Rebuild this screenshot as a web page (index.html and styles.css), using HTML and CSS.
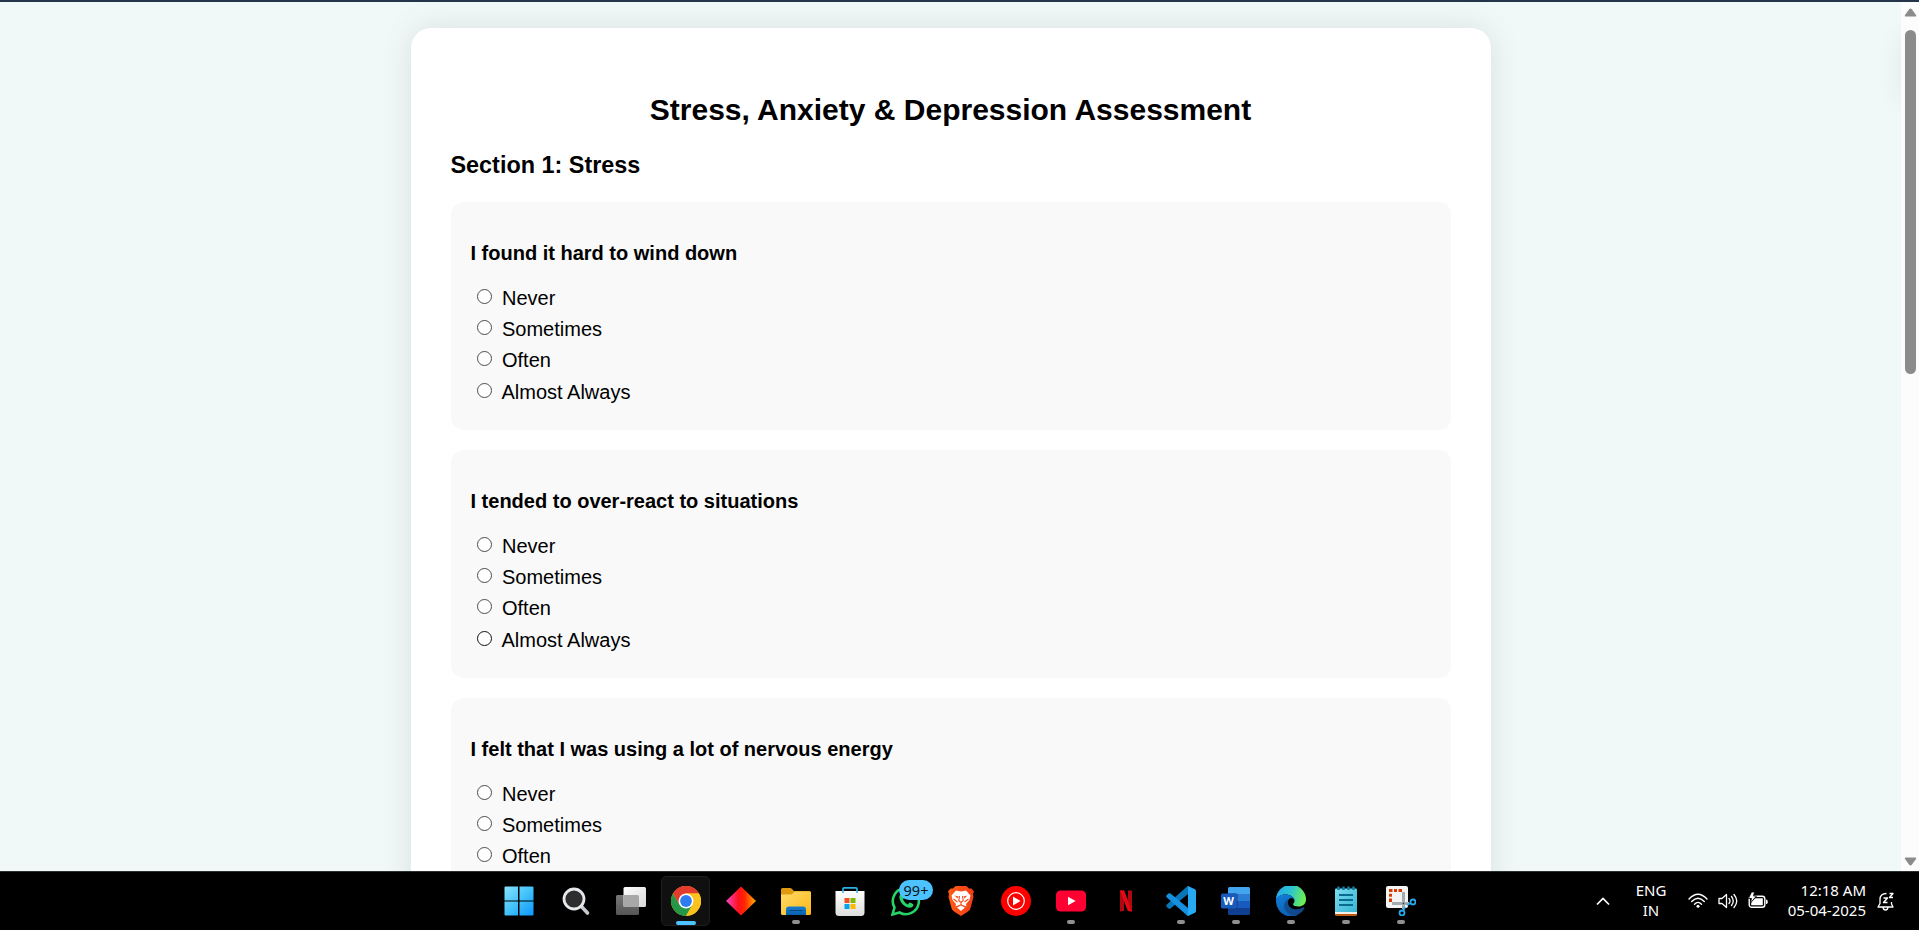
FILE: index.html
```
<!DOCTYPE html>
<html lang="en">
<head>
<meta charset="utf-8">
<title>Stress, Anxiety &amp; Depression Assessment</title>
<link rel="stylesheet" href="styles.css">
</head>
<body>
<div class="screen">
  <div class="viewport">
    <main class="page">
      <div class="drawer-shadow"></div>
      <section class="card">
        <h1 class="title">Stress, Anxiety &amp; Depression Assessment</h1>
        <h2 class="section">Section 1: Stress</h2>
        <div class="question">
          <h3 class="prompt">I found it hard to wind down</h3>
          <label class="option"><input type="radio" name="q1"><span>Never</span></label>
          <label class="option"><input type="radio" name="q1"><span>Sometimes</span></label>
          <label class="option"><input type="radio" name="q1"><span>Often</span></label>
          <label class="option option-wide"><input type="radio" name="q1"><span>Almost Always</span></label>
        </div>
        <div class="question">
          <h3 class="prompt">I tended to over-react to situations</h3>
          <label class="option"><input type="radio" name="q2"><span>Never</span></label>
          <label class="option"><input type="radio" name="q2"><span>Sometimes</span></label>
          <label class="option"><input type="radio" name="q2"><span>Often</span></label>
          <label class="option option-wide option-hover"><input type="radio" name="q2"><span>Almost Always</span></label>
        </div>
        <div class="question">
          <h3 class="prompt">I felt that I was using a lot of nervous energy</h3>
          <label class="option"><input type="radio" name="q3"><span>Never</span></label>
          <label class="option"><input type="radio" name="q3"><span>Sometimes</span></label>
          <label class="option"><input type="radio" name="q3"><span>Often</span></label>
        </div>
      </section>
    </main>
    <div class="scrollbar">
      <svg class="arrow" width="13" height="9" viewBox="0 0 13 9"><path d="M6.5 .5 Q7.3.5 8 1.5L12 7Q12.8 8.5 11.3 8.5H1.7Q.2 8.5 1 7L5 1.5Q5.7.5 6.5.5Z" fill="#8b8b8b"/></svg>
      <div class="thumb"></div>
      <svg class="arrow arrow-down" width="13" height="9" viewBox="0 0 13 9"><path d="M6.5 8.500Q5.700 8.500 5 7.500L1 2Q.2.500 1.700.500H11.300Q12.800.500 12 2L8 7.500Q7.300 8.500 6.500 8.500Z" fill="#8b8b8b"/></svg>
    </div>
  </div>
  <footer class="taskbar">
    <div class="apps">
      <div class="app app-start"><svg width="30" height="30" viewBox="0 0 30 30"><defs><linearGradient id="win" x1="0" y1="0" x2="30" y2="30" gradientUnits="userSpaceOnUse"><stop offset="0" stop-color="#8be3ff"/><stop offset=".5" stop-color="#43c2fb"/><stop offset="1" stop-color="#0a95fa"/></linearGradient></defs><path d="M1.500 .500h12.500v14H.500V1.500q0-1 1-1zM15.500.500h12.500q1.500 0 1.500 1v13h-14zM.500 15.500H14v14H1.500q-1 0-1-1zM15.500 15.500h14v13q0 1-1 1h-13z" fill="url(#win)"/></svg></div>
      <div class="app"><svg width="30" height="30" viewBox="0 0 30 30"><path d="M20 20L26.500 27" stroke="#c5cad0" stroke-width="3.600" stroke-linecap="round"/><circle cx="13" cy="13" r="10" fill="#2d2d2f" stroke="#e6e9ec" stroke-width="2.800"/></svg></div>
      <div class="app"><svg width="30" height="30" viewBox="0 0 30 30"><defs><linearGradient id="tv" x1="0" y1="0" x2="1" y2="1"><stop offset="0" stop-color="#fff"/><stop offset="1" stop-color="#d8d8d8"/></linearGradient><linearGradient id="tv2" x1="0" y1="0" x2="0" y2="1"><stop offset="0" stop-color="#777"/><stop offset="1" stop-color="#555"/></linearGradient></defs><rect x="0" y="9" width="23" height="20" rx="1.500" fill="url(#tv2)"/><rect x="7.500" y="1" width="22.500" height="20" rx="1.500" fill="url(#tv)"/><path d="M7.500 9H21.500q1.500 0 1.500 1.500V21H9q-1.500 0-1.500-1.500z" fill="#a8a8a8"/></svg></div>
      <div class="app app-active"><svg width="30" height="30" viewBox="0 0 30 30"><circle cx="15" cy="15" r="15" fill="#fcc31e"/><path d="M15 15L2 7.500A15 15 0 0 1 28 7.500H15z" fill="#e33b2e"/><path d="M2 7.500A15 15 0 0 0 15 30L21.500 18.700 15 15 8.500 18.700z" fill="#259847"/><path d="M2 7.500L8.500 18.700 15 15 15 7.500z" fill="#e33b2e"/><path d="M28 7.500H15v7.500l6.500 3.700L15 30A15 15 0 0 0 28 7.500z" fill="#fcc31e"/><circle cx="15" cy="15" r="7.500" fill="#fff"/><circle cx="15" cy="15" r="5.900" fill="#2d7df0"/></svg><i class="mark mark-active"></i></div>
      <div class="app"><svg width="30" height="30" viewBox="0 0 30 30"><defs><linearGradient id="dia"><stop offset="0" stop-color="#f546c8"/><stop offset=".42" stop-color="#ff101c"/><stop offset=".62" stop-color="#ff2500"/><stop offset="1" stop-color="#ffb000"/></linearGradient></defs><path d="M15 .500L30 15 15 29.500 0 15z" fill="url(#dia)"/></svg></div>
      <div class="app"><svg width="30" height="30" viewBox="0 0 30 30"><defs><linearGradient id="fold" x1="0" y1="0" x2="1" y2="1"><stop offset="0" stop-color="#ffdb6c"/><stop offset="1" stop-color="#fbb816"/></linearGradient><linearGradient id="fb" x1="0" y1="0" x2="0" y2="1"><stop offset="0" stop-color="#147fd2"/><stop offset="1" stop-color="#0a5fae"/></linearGradient></defs><path d="M0 12V3.500Q0 2 1.500 2H9q1 0 1.800.8L13 5H28.500Q30 5 30 6.500V12z" fill="#e09a10"/><path d="M0 8.500H10.500L14 5.500H28.500Q30 5.500 30 7V27.500Q30 29 28.500 29H1.500Q0 29 0 27.500z" fill="url(#fold)"/><path d="M5 29V23.500Q5 20.500 8 20.500H22Q25 20.500 25 23.500V29z" fill="url(#fb)"/><path d="M8.500 24.500H21.500" stroke="#07477f"/></svg><i class="mark"></i></div>
      <div class="app app-store"><svg width="30" height="30" viewBox="0 0 30 30"><defs><linearGradient id="st" x1="0" y1="0" x2="0" y2="1"><stop offset="0" stop-color="#fff"/><stop offset="1" stop-color="#ddd"/></linearGradient></defs><path d="M8 6V3Q8 1.800 9.200 1.800H20.800Q22 1.800 22 3V6" fill="none" stroke="#2bb3e3" stroke-width="1.700"/><path d="M.500 5H29.500V26.500Q29.500 30 26 30H4Q.500 30 .500 26.500z" fill="url(#st)"/><path d="M9.500 12h5v5h-5z" fill="#f05022"/><path d="M15.500 12h5v5h-5z" fill="#7fb900"/><path d="M9.500 18h5v5h-5z" fill="#01a3ee"/><path d="M15.500 18h5v5h-5z" fill="#ffb800"/><path d="M8 5V7M22 5V7" stroke="#2bb3e3" stroke-width="1.500"/></svg></div>
      <div class="app"><svg width="30" height="30" viewBox="0 0 30 30"><path d="M1.500 28.500L3.500 21.500A13 13 0 1 1 8.500 26.500z" fill="none" stroke="#25d366" stroke-width="2.600"/><path d="M10.500 8Q8.500 8 8.300 11.500 9 17 14.500 20.500 19.500 23 21.800 20.500 23 19 22 18L19 16.600Q18 16.500 17 18.500 13.500 17 12 13.500 13.500 12 12.500 10z" fill="#25d366"/></svg><span class="badge">99+</span></div>
      <div class="app"><svg width="30" height="30" viewBox="0 0 30 30"><defs><linearGradient id="br" x1="0" y1="0" x2="1" y2="0"><stop offset="0" stop-color="#ff5b14"/><stop offset="1" stop-color="#f23c16"/></linearGradient></defs><path d="M9.500 0H20.500L23 2.500 25.500 2.500 28 5.500 27 8 27.500 11 24.500 22Q24 24 22 25.500L15 30 8 25.500Q6 24 5.500 22L2.500 11 3 8 2 5.500 4.500 2.500 7 2.500z" fill="url(#br)"/><path d="M10 4.500L15 5.500 20 4.500 24.500 9.500 23.500 14 20 18 20.500 20.500 17.500 19.200 15 18.300 12.500 19.200 9.500 20.500 10 18 6.500 14 5.500 9.500z M11 21.500L15 19.500 19 21.500 15 25z" fill="#fff"/><path d="M8.500 9.500L12.500 10.500 11.500 12.500zM21.500 9.500L17.500 10.500 18.500 12.500z" fill="#f94b18"/><path d="M13.500 10L12.800 14.500 15 16.500 17.200 14.500 16.500 10M15 16.500V19M7.500 13L11.500 16M22.500 13L18.500 16" fill="none" stroke="#f94b18" stroke-width="1.100"/></svg></div>
      <div class="app"><svg width="30" height="30" viewBox="0 0 30 30"><circle cx="15" cy="15" r="15" fill="#f00"/><circle cx="15" cy="15" r="8.300" fill="none" stroke="#fff" stroke-width="1.200"/><path d="M12 10.500L19.500 15 12 19.500z" fill="#fff"/></svg></div>
      <div class="app"><svg width="30" height="30" viewBox="0 0 30 30"><rect y="4.500" width="30" height="21" rx="4.500" fill="#ff0033"/><path d="M12 10.700L19.700 15 12 19.300z" fill="#fff"/></svg><i class="mark"></i></div>
      <div class="app"><svg width="30" height="30" viewBox="0 0 30 30"><path d="M9 4.500h4V25l-4 .5zM17 4.500h4v21l-4-.5z" fill="#b00710"/><path d="M9 4.500h4.200L21 25.500l-4.200-.4z" fill="#e50914"/></svg></div>
      <div class="app"><svg width="30" height="30" viewBox="0 0 30 30"><path d="M22 0L22 8 4.500 22.500Q3.500 23.200 2.500 22.500L.600 20.700Q-.200 19.700.600 18.800L20.500 1Q21.200.200 22 0z" fill="#0877b9"/><path d="M22 30L22 22 4.500 7.500Q3.500 6.800 2.500 7.500L.600 9.300Q-.200 10.300.600 11.200L20.500 29Q21.200 29.800 22 30z" fill="#1490df"/><path d="M22 0L29 3.300Q30 3.800 30 5V25Q30 26.200 29 26.700L22 30z" fill="#27a9f3"/></svg><i class="mark"></i></div>
      <div class="app"><svg width="30" height="30" viewBox="0 0 30 30"><path d="M7 8V2.500Q7 1 8.500 1H27.500Q29 1 29 2.500V8z" fill="#42a5ee"/><path d="M7 8H29v7H7z" fill="#2b7cd3"/><path d="M7 15H29v7H7z" fill="#185abd"/><path d="M7 22H29v5.500Q29 29 27.500 29H8.500Q7 29 7 27.500z" fill="#103f91"/><path d="M7 7H14.500Q17 7 17 9.500V22Q17 24 15 24H7z" fill="#123c80" opacity=".5"/><rect y="7.500" width="15.500" height="15" rx="1.500" fill="#185abd"/><text x="7.500" y="19" class="word-letter">W</text></svg><i class="mark"></i></div>
      <div class="app"><svg width="30" height="30" viewBox="0 0 30 30"><defs><linearGradient id="e1" x1="0" y1=".2" x2="1" y2=".4"><stop offset="0" stop-color="#27a7ec"/><stop offset=".5" stop-color="#2cc4d0"/><stop offset="1" stop-color="#6df04f"/></linearGradient><linearGradient id="e2" x1="0" y1="0" x2=".7" y2="1"><stop offset="0" stop-color="#1280dc"/><stop offset="1" stop-color="#0d58aa"/></linearGradient></defs><path d="M0 14A15 15 0 0 1 30 13.500C30 18 26.500 20.500 22.500 20.500 19.500 20.500 17 19.500 17 18.200 17 17.500 18.500 17 18.500 15 18.500 11 14 8.500 9.500 8.500 4.500 8.500 1 11 0 14z" fill="url(#e1)"/><path d="M0 15C0 11 4 8.500 9 8.500 14 8.500 18.500 11 18.500 15 18 12.500 16 11.500 14 12.500 10.500 14.500 11.500 20 15 22 19 24.500 23.500 23.500 27.500 21.500 28.300 21.200 28.700 21.800 28.200 22.500A15 15 0 0 1 0 15z" fill="url(#e2)"/><path d="M14 12.500C8 14 6.500 20.500 10 25 12.500 28.500 17 30 20 29.200 24 28 27 25 28.200 22.500 28.700 21.800 28.300 21.200 27.500 21.500 23.500 23.500 19 24.500 15 22 11.500 20 10.500 14.500 14 12.500z" fill="#123f78" opacity=".65"/></svg><i class="mark"></i></div>
      <div class="app"><svg width="30" height="30" viewBox="0 0 30 30"><defs><linearGradient id="np" x1="0" y1="0" x2="1" y2="1"><stop offset="0" stop-color="#7fdcee"/><stop offset="1" stop-color="#35b4d4"/></linearGradient></defs><path d="M4 24H26V28.500Q26 30 24.500 30H5.500Q4 30 4 28.500z" fill="#bd5a12"/><path d="M4 22H26V28H4z" fill="#f3eee8"/><path d="M5 2.500H25Q26 2.500 26 3.500V26H4V3.500Q4 2.500 5 2.500z" fill="url(#np)"/><path d="M8 9H22M8 14H22M8 19H22" stroke="#086b8f" stroke-width="2"/><path d="M7.500 .500V4M12.500 .500V4M17.500 .500V4M22.500 .500V4" stroke="#0b7ca2" stroke-width="2.500"/></svg><i class="mark"></i></div>
      <div class="app"><svg width="30" height="30" viewBox="0 0 30 30"><rect width="22" height="22" rx="2" fill="#f4f4f4"/><path d="M3 3h3.500v3H3zM8 3h3v3H8zM12.500 3H16v3h-3.500zM3 7.800h3v3H3zM3 12.500h3v3.500H3z" fill="#d83b01"/><path d="M17.500 6V17.500H6M17.500 17.500L23 17.500M17.500 17.500V23" fill="none" stroke="#a2aab2" stroke-width="3"/><circle cx="17.500" cy="17.500" r=".8" fill="#333"/><circle cx="27" cy="16" r="2.500" fill="none" stroke="#28a8ea" stroke-width="1.800"/><circle cx="16" cy="27" r="2.500" fill="none" stroke="#28a8ea" stroke-width="1.800"/><path d="M21 19L25 17M19 21L17 25" stroke="#28a8ea" stroke-width="1.800"/></svg><i class="mark"></i></div>
    </div>
    <div class="tray">
      <svg width="14" height="9" viewBox="0 0 14 9"><path d="M1 7.500L7 1.500 13 7.500" fill="none" stroke="#fff" stroke-width="1.700"/></svg>
      <div class="lang"><span>ENG</span><span>IN</span></div>
      <div class="status">
        <svg width="20" height="16" viewBox="0 0 20 16" fill="none" stroke="#fff" stroke-width="1.400" stroke-linecap="round"><path d="M1 6Q10-3.500 19 6M3.700 8.600Q10 2 16.300 8.600M6.500 11.200Q10 7.500 13.500 11.200"/><circle cx="10" cy="13.300" r="1.500" fill="#fff" stroke="none"/></svg>
        <svg width="20" height="16" viewBox="0 0 20 16" fill="none" stroke="#fff" stroke-width="1.300" stroke-linejoin="round" stroke-linecap="round"><path d="M1 5.500H4L8.500 1.500V14.500L4 10.500H1zM11 5.500Q13 8 11 10.500M13.500 3.500Q17 8 13.500 12.500M16 1.500Q21.500 8 16 14.500"/></svg>
        <svg class="battery" width="20" height="17" viewBox="0 0 20 17"><rect x="1.200" y="4.200" width="15.600" height="11" rx="2.500" fill="none" stroke="#fff" stroke-width="1.400"/><path d="M3.200 13.200V10L7.500 6.200H14.800V13.200z" fill="#fff"/><path d="M18 7.500Q19.700 7.500 19.700 9V10.500Q19.700 12 18 12z" fill="#fff"/><path d="M3.500 0H6.500L5.500 4H8.500L2.500 11 3.500 6.500H.500z" fill="#fff" stroke="#000" stroke-width=".8"/></svg>
      </div>
      <div class="clock"><span>12:18 AM</span><span>05-04-2025</span></div>
      <svg class="bell" width="18" height="19" viewBox="0 0 18 19" fill="none" stroke="#fff" stroke-width="1.300" stroke-linejoin="round"><path d="M9.500 1.500Q3 1.500 3 7.500V11.500L1 15H16L14.500 12V10M6 15.500Q6.500 18 8.500 18T11 15.500"/><path d="M6.500 6H10.500L6.500 10.500H10.500M12.500 1.500H16L12.500 5.500H16" stroke-width="1.400"/></svg>
    </div>
  </footer>
</div>
</body>
</html>
```

FILE: styles.css
```
* { box-sizing: border-box; }
body { margin: 0; font-family: "Liberation Sans", Arial, sans-serif; color: #000; }
.screen { display: flex; flex-direction: column; width: 1919px; height: 930px; overflow: hidden; }
.viewport { display: flex; height: 871px; overflow: hidden; border-top: 2px solid #22354a; }
.page { position: relative; flex: 1; overflow: hidden; background: #f0f9f8; padding-top: 26px; }
.drawer-shadow { position: absolute; left: 100%; top: 36px; width: 60px; height: 64px; box-shadow: 0 0 28px rgba(0, 0, 0, 0.07); }
.card { width: 1080px; height: 1400px; margin: 0 auto; padding: 63px 40px; border-radius: 20px; background: #fff; box-shadow: 0 0 32px rgba(0, 0, 0, 0.1); }
.title { margin: 0; font-size: 30px; line-height: 38px; text-align: center; white-space: nowrap; }
.section { margin: 21px 0 22px; font-size: 23.4px; line-height: 30px; }
.question { height: 228px; margin-bottom: 20px; padding: 37px 20px 0; border-radius: 12px; background: #f9f9f9; }
.prompt { margin: 0 0 15px; font-size: 20px; line-height: 28px; white-space: nowrap; }
.option { display: flex; align-items: center; height: 31.3px; padding-left: 6px; gap: 10.500px; font-size: 20px; line-height: 24px; }
.option-wide { gap: 10px; }
.option input { appearance: none; width: 15px; height: 15px; margin: 0 0 3px; border: 1px solid #4c4c4c; border-radius: 50%; background: #fff; }
.option-hover input { border-color: #111; }
.scrollbar { display: flex; flex-direction: column; align-items: center; width: 18px; background: #fcfcfc; padding-top: 6px; }
.arrow { flex: none; }
.thumb { width: 11px; height: 344px; margin-top: 13px; border-radius: 6px; background: #8b8b8b; }
.arrow-down { margin-top: auto; margin-bottom: 5px; }
.taskbar { display: flex; align-items: center; height: 59px; background: #000; border-top: 1px solid #2b2f2f; color: #fff; font-family: "Noto Sans", "Open Sans", sans-serif; }
.apps { display: flex; margin-left: 493px; }
.app { position: relative; display: flex; align-items: center; justify-content: center; width: 55px; height: 50px; flex: none; }
.app svg { display: block; }
.app-start { padding-right: 3px; }
.app-store { padding-right: 1px; }
.app-active { width: 49px; margin: 0 3px; border: 1px solid #1e1e1e; border-radius: 5px; background: #101010; }
.mark { position: absolute; bottom: 2px; left: 50%; width: 8px; height: 4px; margin-left: -4px; border-radius: 2px; background: #8f8f8f; }
.mark-active { bottom: 0; width: 20px; margin-left: -10px; background: #4cc2ff; }
.badge { position: absolute; left: 21px; top: 4px; width: 34px; height: 20px; border-radius: 10px; background: #4cc2ff; color: #111; font-size: 14.500px; line-height: 20px; text-align: center; }
.word-letter { font: bold 11px "Open Sans", sans-serif; fill: #fff; text-anchor: middle; }
.tray { display: flex; align-items: center; margin-left: auto; padding-right: 24px; }
.lang, .clock { display: flex; flex-direction: column; margin-bottom: 2px; font-size: 15px; line-height: 20px; white-space: nowrap; }
.lang { align-items: center; width: 30px; margin-left: 26px; }
.status { display: flex; align-items: center; gap: 10px; margin-left: 22px; }
.battery { margin-bottom: 2px; }
.clock { align-items: flex-end; width: 78px; margin-left: 20px; }
.bell { margin-left: 11px; }
```
